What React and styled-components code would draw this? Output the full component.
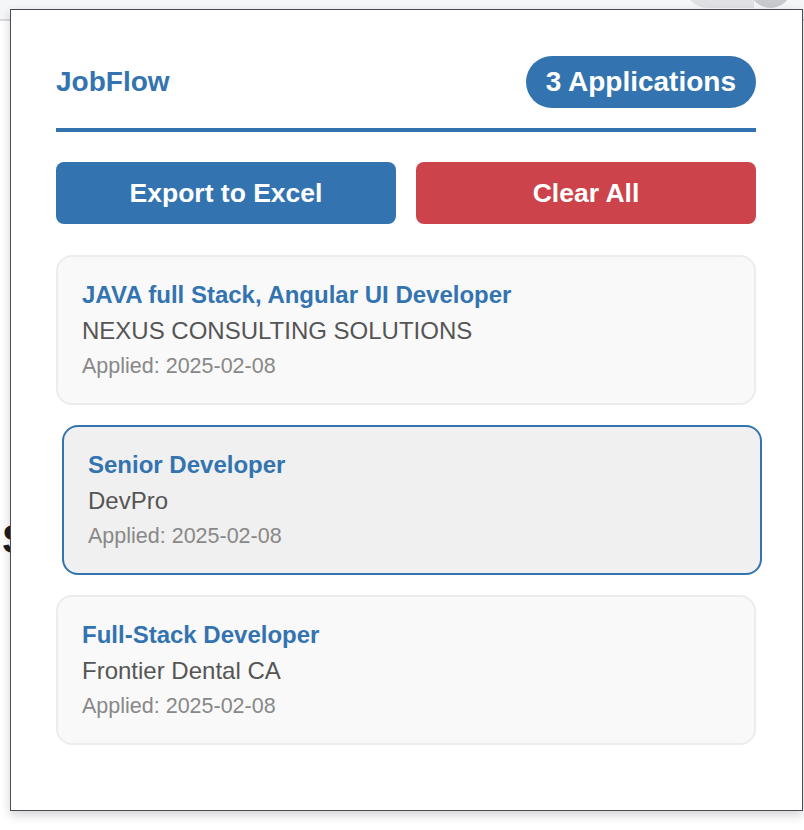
import React from "react";
import styled, { createGlobalStyle } from "styled-components";

const GlobalStyle = createGlobalStyle`
  * {
    box-sizing: border-box;
  }
  body {
    margin: 0;
    background: #ffffff;
    font-family: "Liberation Sans", Arial, sans-serif;
  }
`;

const Page = styled.div`
  position: relative;
  width: 804px;
  height: 830px;
  overflow: hidden;
  background: #ffffff;
`;

const Toolbar = styled.div`
  position: relative;
  height: 21px;
  background: #f5f6f8;
  border-bottom: 2px solid #d9dadd;
`;

const Tab = styled.div`
  position: absolute;
  right: 50px;
  top: -20px;
  width: 70px;
  height: 28px;
  border-radius: 0 0 0 24px;
  background: #e0e1e4;
`;

const Avatar = styled.div`
  position: absolute;
  right: 12px;
  top: -35px;
  width: 43px;
  height: 43px;
  border-radius: 50%;
  background: #c9cacf;
`;

const PageHeading = styled.h1`
  margin: 496px 0 0 2px;
  font-size: 40px;
  font-weight: 700;
  color: #1d1d1f;
`;

const Popup = styled.div`
  position: absolute;
  left: 10px;
  top: 9px;
  width: 793px;
  height: 802px;
  background: #ffffff;
  border: 1px solid #4a4b55;
  box-shadow: 0 4px 10px rgba(0, 0, 0, 0.18);
  padding: 46px 46px 0 45px;
`;

const Header = styled.div`
  display: flex;
  align-items: center;
  justify-content: space-between;
  padding-bottom: 20px;
  border-bottom: 4px solid #3374b0;
  margin-bottom: 30px;
`;

const Logo = styled.div`
  font-size: 28px;
  font-weight: 700;
  color: #3374b0;
`;

const Badge = styled.div`
  background: #3374b0;
  color: #ffffff;
  font-size: 28px;
  line-height: 32px;
  font-weight: 700;
  padding: 10px 20px;
  border-radius: 26px;
`;

const Actions = styled.div`
  display: grid;
  grid-template-columns: 1fr 1fr;
  gap: 20px;
  margin-bottom: 31px;
`;

const Button = styled.button`
  height: 62px;
  border: none;
  border-radius: 8px;
  background: ${(p) => (p.$danger ? "#cc434b" : "#3374b0")};
  color: #ffffff;
  font-family: "Liberation Sans", Arial, sans-serif;
  font-size: 26.5px;
  font-weight: 700;
  cursor: pointer;
`;

const List = styled.div`
  display: flex;
  flex-direction: column;
  gap: 20px;
`;

const Card = styled.div`
  height: 150px;
  padding: 24px;
  border-radius: 16px;
  border: 2px solid ${(p) => (p.$active ? "#3374b0" : "#ececec")};
  background: ${(p) => (p.$active ? "#f0f0f0" : "#f9f9f9")};
  transform: ${(p) => (p.$active ? "translateX(6px)" : "none")};
`;

const Title = styled.div`
  font-size: 24px;
  font-weight: 700;
  color: #3374b0;
  margin-bottom: 8px;
`;

const Company = styled.div`
  font-size: 24px;
  color: #555555;
  margin-bottom: 9px;
`;

const Applied = styled.div`
  font-size: 21.5px;
  color: #888888;
`;

const jobs = [
  {
    title: "JAVA full Stack, Angular UI Developer",
    company: "NEXUS CONSULTING SOLUTIONS",
    date: "2025-02-08",
  },
  { title: "Senior Developer", company: "DevPro", date: "2025-02-08", active: true },
  { title: "Full-Stack Developer", company: "Frontier Dental CA", date: "2025-02-08" },
];

const App = () => {
  return (
    <Page>
      <GlobalStyle />
      <Toolbar>
        <Tab />
        <Avatar />
      </Toolbar>
      <PageHeading>S</PageHeading>
      <Popup>
        <Header>
          <Logo>JobFlow</Logo>
          <Badge>{jobs.length} Applications</Badge>
        </Header>
        <Actions>
          <Button>Export to Excel</Button>
          <Button $danger>Clear All</Button>
        </Actions>
        <List>
          {jobs.map((job, i) => (
            <Card key={i} $active={job.active}>
              <Title>{job.title}</Title>
              <Company>{job.company}</Company>
              <Applied>Applied: {job.date}</Applied>
            </Card>
          ))}
        </List>
      </Popup>
    </Page>
  );
};

export default App;
